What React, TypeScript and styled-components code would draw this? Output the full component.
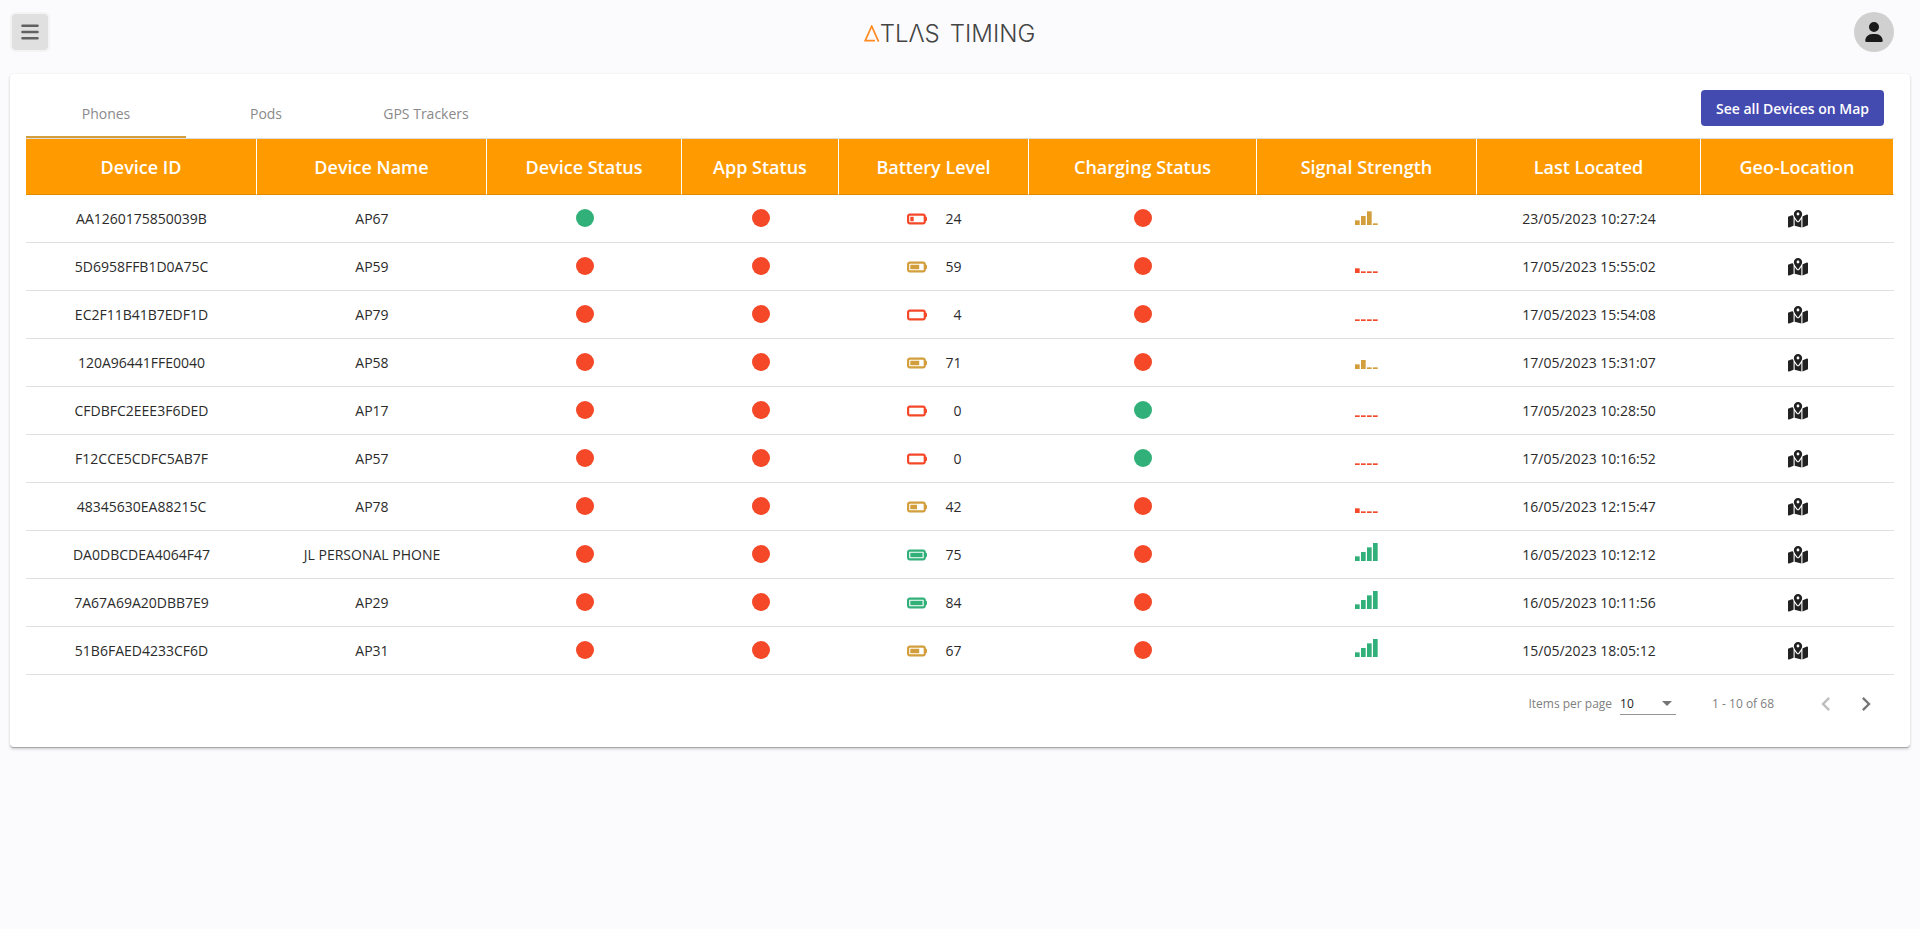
import React, { useState } from 'react';
import styled, { createGlobalStyle } from 'styled-components';
import {
  FaBars,
  FaBatteryEmpty,
  FaBatteryFull,
  FaBatteryHalf,
  FaBatteryQuarter,
  FaBatteryThreeQuarters,
  FaMapLocationDot,
  FaUser,
} from 'react-icons/fa6';

const GREEN = '#32b07a';
const RED = '#f44829';
const AMBER = '#d39e3c';

const GlobalStyle = createGlobalStyle`
  *, *::before, *::after { box-sizing: border-box; }
  body {
    margin: 0;
    min-height: 100vh;
    background: #fbfbfd;
    color: #2b2b2b;
    font-family: 'Open Sans', 'Noto Sans', sans-serif;
    font-size: 14px;
  }
  button, select { font-family: inherit; }
`;

const TopBar = styled.header`
  display: grid;
  grid-template-columns: 1fr auto 1fr;
  align-items: center;
  height: 64px;
  padding: 0 26px 0 10px;
`;

const MenuButton = styled.button`
  display: flex;
  align-items: center;
  justify-content: center;
  width: 40px;
  height: 40px;
  padding: 0;
  border: 2px solid #f3f3f4;
  border-radius: 6px;
  background: #e0e0e0;
  color: #616161;
  cursor: pointer;
`;

const Brand = styled.a`
  display: flex;
  align-items: center;
  gap: 10px;
  padding: 3px 5px 0 0;
  color: #444;
  font-family: Inter, 'Open Sans', sans-serif;
  font-size: 24px;
  font-weight: 300;
  line-height: 32px;
  text-decoration: none;
`;

const BrandWord = styled.span`
  display: flex;
  align-items: center;
`;

const AvatarButton = styled.button`
  display: flex;
  align-items: center;
  justify-content: center;
  justify-self: end;
  width: 40px;
  height: 40px;
  padding: 0;
  border: 0;
  border-radius: 50%;
  background: #d0d0d0;
  color: #1a1a1a;
  cursor: pointer;
`;

const Card = styled.main`
  margin: 10px 10px 0;
  padding: 16px 16px 15px;
  border-bottom: 1px solid #a8a8ab;
  border-radius: 4px;
  background: #fff;
  box-shadow: 0 1px 3px rgba(0, 0, 0, 0.2);
`;

const Toolbar = styled.div`
  display: flex;
  align-items: flex-start;
  justify-content: space-between;
  height: 49px;
  padding-right: 10px;
  border-bottom: 1px solid #dcdcdc;
`;

const Tabs = styled.div`
  display: flex;
  align-self: stretch;
`;

const Tab = styled.button<{ $active: boolean }>`
  width: 160px;
  padding: 0;
  border: 0;
  border-bottom: 2px solid ${(p) => (p.$active ? AMBER : 'transparent')};
  background: none;
  color: #8a8a8a;
  font-size: 14px;
  cursor: pointer;
`;

const MapButton = styled.button`
  height: 36px;
  padding: 0 15px;
  border: 0;
  border-radius: 4px;
  background: #434ab0;
  color: #fff;
  font-size: 14px;
  font-weight: 600;
  cursor: pointer;
`;

const Table = styled.table`
  width: 100%;
  table-layout: fixed;
  border-collapse: separate;
  border-spacing: 0;
`;

const HeadCell = styled.th`
  height: 56px;
  padding: 0;
  border-right: 1px solid #fff;
  border-bottom: 1px solid #e08a00;
  background: #ff9b00;
  color: #fff;
  font-size: 18px;
  font-weight: 600;
  text-align: center;
`;

const Cell = styled.td`
  height: 48px;
  padding: 0;
  border-bottom: 1px solid #e0e0e0;
  text-align: center;
  vertical-align: middle;
`;

const StatusDot = styled.span<{ $on: boolean }>`
  display: block;
  width: 18px;
  height: 18px;
  margin: 0 auto 2px;
  border-radius: 50%;
  background: ${(p) => (p.$on ? GREEN : RED)};
`;

const Battery = styled.span<{ $color: string }>`
  display: flex;
  align-items: center;
  justify-content: center;
  gap: 18px;

  svg { color: ${(p) => p.$color}; }
`;

const BatteryValue = styled.span`
  width: 17px;
  text-align: right;
`;

const SignalIcon = styled.svg`
  display: block;
  width: 24px;
  height: 18px;
  margin: 0 auto 6px;
`;

const LocateButton = styled.button`
  display: flex;
  margin: 0 auto;
  padding: 0;
  border: 0;
  background: none;
  color: #212121;
  cursor: pointer;
`;

const Paginator = styled.nav`
  display: flex;
  align-items: center;
  justify-content: flex-end;
  height: 57px;
  padding: 0 8px;
  color: #808080;
  font-size: 12px;
`;

const PageSize = styled.label`
  display: flex;
  align-items: center;
  gap: 8px;
`;

const SelectBox = styled.span`
  display: grid;
  align-items: center;
  width: 56px;
  border-bottom: 1px solid #949494;

  > * { grid-area: 1 / 1; }
  > svg { justify-self: end; margin-right: 4px; pointer-events: none; }
`;

const PageSelect = styled.select`
  height: 22px;
  padding: 0;
  border: 0;
  appearance: none;
  background: none;
  color: #212121;
  font-size: 12px;
`;

const Range = styled.span`
  margin: 0 32px 0 36px;
`;

const PageButton = styled.button`
  display: flex;
  align-items: center;
  justify-content: center;
  width: 40px;
  height: 40px;
  padding: 0;
  border: 0;
  background: none;
  color: #757575;
  cursor: pointer;

  &:disabled { color: #bdbdbd; cursor: default; }
`;

interface Device {
  id: string;
  name: string;
  online: boolean;
  battery: number;
  charging: boolean;
  signal: number;
  located: string;
}

const devices: Device[] = [
  { id: 'AA1260175850039B', name: 'AP67', online: true, battery: 24, charging: false, signal: 3, located: '23/05/2023 10:27:24' },
  { id: '5D6958FFB1D0A75C', name: 'AP59', online: false, battery: 59, charging: false, signal: 1, located: '17/05/2023 15:55:02' },
  { id: 'EC2F11B41B7EDF1D', name: 'AP79', online: false, battery: 4, charging: false, signal: 0, located: '17/05/2023 15:54:08' },
  { id: '120A96441FFE0040', name: 'AP58', online: false, battery: 71, charging: false, signal: 2, located: '17/05/2023 15:31:07' },
  { id: 'CFDBFC2EEE3F6DED', name: 'AP17', online: false, battery: 0, charging: true, signal: 0, located: '17/05/2023 10:28:50' },
  { id: 'F12CCE5CDFC5AB7F', name: 'AP57', online: false, battery: 0, charging: true, signal: 0, located: '17/05/2023 10:16:52' },
  { id: '48345630EA88215C', name: 'AP78', online: false, battery: 42, charging: false, signal: 1, located: '16/05/2023 12:15:47' },
  { id: 'DA0DBCDEA4064F47', name: 'JL PERSONAL PHONE', online: false, battery: 75, charging: false, signal: 4, located: '16/05/2023 10:12:12' },
  { id: '7A67A69A20DBB7E9', name: 'AP29', online: false, battery: 84, charging: false, signal: 4, located: '16/05/2023 10:11:56' },
  { id: '51B6FAED4233CF6D', name: 'AP31', online: false, battery: 67, charging: false, signal: 4, located: '15/05/2023 18:05:12' },
];

const columns = [
  { title: 'Device ID', width: 231 },
  { title: 'Device Name', width: 230 },
  { title: 'Device Status', width: 195 },
  { title: 'App Status', width: 157 },
  { title: 'Battery Level', width: 190 },
  { title: 'Charging Status', width: 228 },
  { title: 'Signal Strength', width: 220 },
  { title: 'Last Located', width: 224 },
  { title: 'Geo-Location', width: 193 },
];
const totalWidth = columns.reduce((sum, c) => sum + c.width, 0);

function batteryLook(level: number) {
  if (level >= 75) return { Icon: FaBatteryFull, color: GREEN };
  if (level >= 50) return { Icon: FaBatteryThreeQuarters, color: AMBER };
  if (level >= 40) return { Icon: FaBatteryHalf, color: AMBER };
  if (level >= 10) return { Icon: FaBatteryQuarter, color: RED };
  return { Icon: FaBatteryEmpty, color: RED };
}

function BatteryLevel({ level }: { level: number }) {
  const { Icon, color } = batteryLook(level);
  return (
    <Battery $color={color}>
      <Icon size={20} aria-hidden />
      <BatteryValue>{level}</BatteryValue>
    </Battery>
  );
}

function Signal({ strength }: { strength: number }) {
  const color = strength >= 4 ? GREEN : strength >= 2 ? AMBER : RED;
  return (
    <SignalIcon viewBox="0 0 72 54" fill={color} role="img" aria-label={`Signal ${strength} of 4`}>
      {[14, 27, 41, 54].map((full, i) => {
        const h = i < strength ? full : 5;
        return <rect key={full} x={i * 18} y={54 - h} width={14} height={h} />;
      })}
    </SignalIcon>
  );
}

export default function App() {
  const [tab, setTab] = useState('Phones');
  return (
    <>
      <GlobalStyle />
      <TopBar>
        <MenuButton aria-label="Open menu">
          <FaBars size={20} />
        </MenuButton>
        <Brand href="#">
          <BrandWord>
            <svg width="16" height="17" viewBox="0 0 16 17" fill="none" stroke="#ff8a1f" strokeWidth="1.7" aria-hidden>
              <path d="M14.6 16.6 L7.7 1.2 L1.2 15.6 H11" />
            </svg>
            TLΛS
          </BrandWord>
          <BrandWord>TIMING</BrandWord>
        </Brand>
        <AvatarButton aria-label="Account">
          <FaUser size={20} />
        </AvatarButton>
      </TopBar>
      <Card>
        <Toolbar>
          <Tabs role="tablist">
            {['Phones', 'Pods', 'GPS Trackers'].map((name) => (
              <Tab key={name} role="tab" aria-selected={tab === name} $active={tab === name} onClick={() => setTab(name)}>
                {name}
              </Tab>
            ))}
          </Tabs>
          <MapButton>See all Devices on Map</MapButton>
        </Toolbar>
        <Table>
          <colgroup>
            {columns.map((c) => (
              <col key={c.title} style={{ width: `${(c.width / totalWidth) * 100}%` }} />
            ))}
          </colgroup>
          <thead>
            <tr>
              {columns.map((c) => (
                <HeadCell key={c.title} scope="col">{c.title}</HeadCell>
              ))}
            </tr>
          </thead>
          <tbody>
            {devices.map((d) => (
              <tr key={d.id}>
                <Cell>{d.id}</Cell>
                <Cell>{d.name}</Cell>
                <Cell><StatusDot $on={d.online} /></Cell>
                <Cell><StatusDot $on={false} /></Cell>
                <Cell><BatteryLevel level={d.battery} /></Cell>
                <Cell><StatusDot $on={d.charging} /></Cell>
                <Cell><Signal strength={d.signal} /></Cell>
                <Cell>{d.located}</Cell>
                <Cell>
                  <LocateButton aria-label={`Locate ${d.name}`}>
                    <FaMapLocationDot size={20} />
                  </LocateButton>
                </Cell>
              </tr>
            ))}
          </tbody>
        </Table>
        <Paginator aria-label="Pages">
          <PageSize>
            Items per page
            <SelectBox>
              <PageSelect defaultValue="10">
                <option>10</option>
                <option>25</option>
                <option>50</option>
              </PageSelect>
              <svg width="10" height="5" viewBox="0 0 10 5" fill="#757575" aria-hidden>
                <path d="M0 0h10L5 5z" />
              </svg>
            </SelectBox>
          </PageSize>
          <Range>1 - 10 of 68</Range>
          <PageButton aria-label="Previous page" disabled>
            <svg width="28" height="28" viewBox="0 0 24 24" fill="currentColor">
              <path d="M15.41 7.41L14 6l-6 6 6 6 1.41-1.41L10.83 12z" />
            </svg>
          </PageButton>
          <PageButton aria-label="Next page">
            <svg width="28" height="28" viewBox="0 0 24 24" fill="currentColor">
              <path d="M10 6L8.59 7.41 13.17 12l-4.58 4.59L10 18l6-6z" />
            </svg>
          </PageButton>
        </Paginator>
      </Card>
    </>
  );
}
